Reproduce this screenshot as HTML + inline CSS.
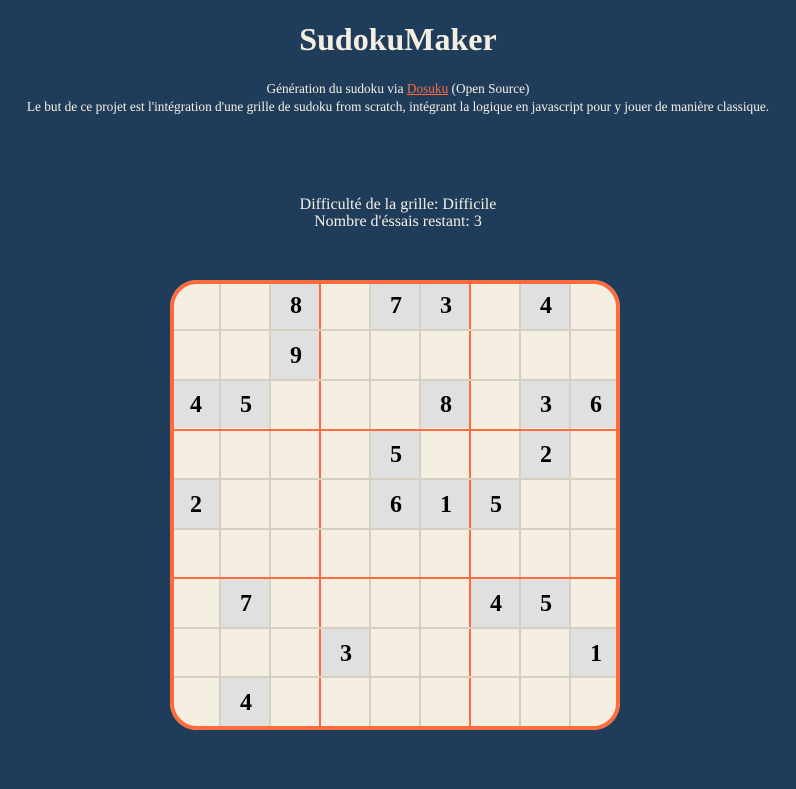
<!DOCTYPE html>
<html><head><meta charset="utf-8"><style>
body{margin:0;background:#1f3c5a;width:796px;height:789px;overflow:hidden;font-family:"Liberation Serif",serif;color:#f5efe2;}
h1{position:absolute;top:20px;left:0;width:796px;text-align:center;margin:0;font-size:32px;font-weight:bold;line-height:38px;}
.p{position:absolute;left:0;width:796px;text-align:center;font-size:13.3px;line-height:18px;}
.p a{color:#ff6b3d;text-decoration:underline;}
.d{position:absolute;top:196px;left:0;width:796px;text-align:center;font-size:16px;line-height:17px;}
#g{position:absolute;left:170px;top:280px;width:450px;height:450px;border-radius:27px;overflow:hidden;background:#f5efe2;}
.c{position:absolute;width:48px;height:48px;background:#e0e0e0;color:#000;font-weight:bold;font-size:24px;line-height:50px;text-align:center;padding-left:2px;box-sizing:border-box;}
.v{position:absolute;top:0;width:2px;height:450px;background:#d6d0c3;}
.h{position:absolute;left:0;height:2px;width:450px;background:#d6d0c3;}
.o{background:#ff6b3d;}
#b{position:absolute;inset:0;border:4px solid #ff6b3d;border-radius:27px;}
</style></head><body>
<h1>SudokuMaker</h1>
<div class="p" style="top:80px">Génération du sudoku via <a>Dosuku</a> (Open Source)</div>
<div class="p" style="top:98px">Le but de ce projet est l'intégration d'une grille de sudoku from scratch, intégrant la logique en javascript pour y jouer de manière classique.</div>
<div class="d">Difficulté de la grille: Difficile<br>Nombre d'éssais restant: 3</div>
<div id="g">
<div class="c" style="left:101px;top:1px">8</div>
<div class="c" style="left:201px;top:1px">7</div>
<div class="c" style="left:251px;top:1px">3</div>
<div class="c" style="left:351px;top:1px">4</div>
<div class="c" style="left:101px;top:51px">9</div>
<div class="c" style="left:1px;top:100px">4</div>
<div class="c" style="left:51px;top:100px">5</div>
<div class="c" style="left:251px;top:100px">8</div>
<div class="c" style="left:351px;top:100px">3</div>
<div class="c" style="left:401px;top:100px">6</div>
<div class="c" style="left:201px;top:150px">5</div>
<div class="c" style="left:351px;top:150px">2</div>
<div class="c" style="left:1px;top:200px">2</div>
<div class="c" style="left:201px;top:200px">6</div>
<div class="c" style="left:251px;top:200px">1</div>
<div class="c" style="left:301px;top:200px">5</div>
<div class="c" style="left:51px;top:299px">7</div>
<div class="c" style="left:301px;top:299px">4</div>
<div class="c" style="left:351px;top:299px">5</div>
<div class="c" style="left:151px;top:349px">3</div>
<div class="c" style="left:401px;top:349px">1</div>
<div class="c" style="left:51px;top:398px">4</div>
<div class="v" style="left:49px"></div><div class="v" style="left:99px"></div><div class="v o" style="left:149px"></div>
<div class="v" style="left:199px"></div><div class="v" style="left:249px"></div><div class="v o" style="left:299px"></div>
<div class="v" style="left:349px"></div><div class="v" style="left:399px"></div>
<div class="h" style="top:49px"></div><div class="h" style="top:99px"></div><div class="h o" style="top:149px"></div>
<div class="h" style="top:198px"></div><div class="h" style="top:248px"></div><div class="h o" style="top:297px"></div>
<div class="h" style="top:347px"></div><div class="h" style="top:396px"></div>
<div id="b"></div>
</div>
</body></html>
